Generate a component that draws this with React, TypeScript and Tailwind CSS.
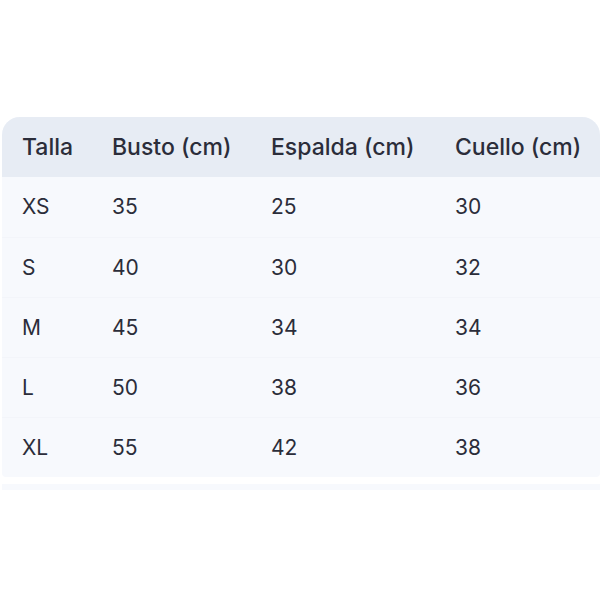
import React from "react";

const rows = [
  ["XS", "35", "25", "30"],
  ["S", "40", "30", "32"],
  ["M", "45", "34", "34"],
  ["L", "50", "38", "36"],
  ["XL", "55", "42", "38"],
];

const cols = "grid grid-cols-[90px_159px_184px_165px]";

export default function App() {
  return (
    <div
      className="w-[600px] h-[600px] bg-white pt-[117px] pl-[2px] text-[#2b2d3a]"
      style={{ fontFamily: "Inter, 'Noto Sans', sans-serif" }}
    >
      <div className="w-[598px] rounded-t-[18px] rounded-b-[4px] overflow-hidden bg-[#f7f9fd]">
        <div className={`${cols} h-[60px] items-center bg-[#e7ecf4] text-[23px] font-medium`}>
          <div className="pl-[20px]">Talla</div>
          <div className="pl-[20px]">Busto (cm)</div>
          <div className="pl-[20px]">Espalda (cm)</div>
          <div className="pl-[20px]">Cuello (cm)</div>
        </div>
        {rows.map((r, i) => (
          <div
            key={i}
            className={`${cols} h-[60px] items-center text-[21px] ${i > 0 ? "border-t border-[#f3f5fa]" : ""}`}
          >
            {r.map((c, j) => (
              <div key={j} className="pl-[20px]">
                {c}
              </div>
            ))}
          </div>
        ))}
      </div>
      <div className="mt-[7px] w-[598px] h-[6px] bg-[#f7f9fd]" />
    </div>
  );
}
